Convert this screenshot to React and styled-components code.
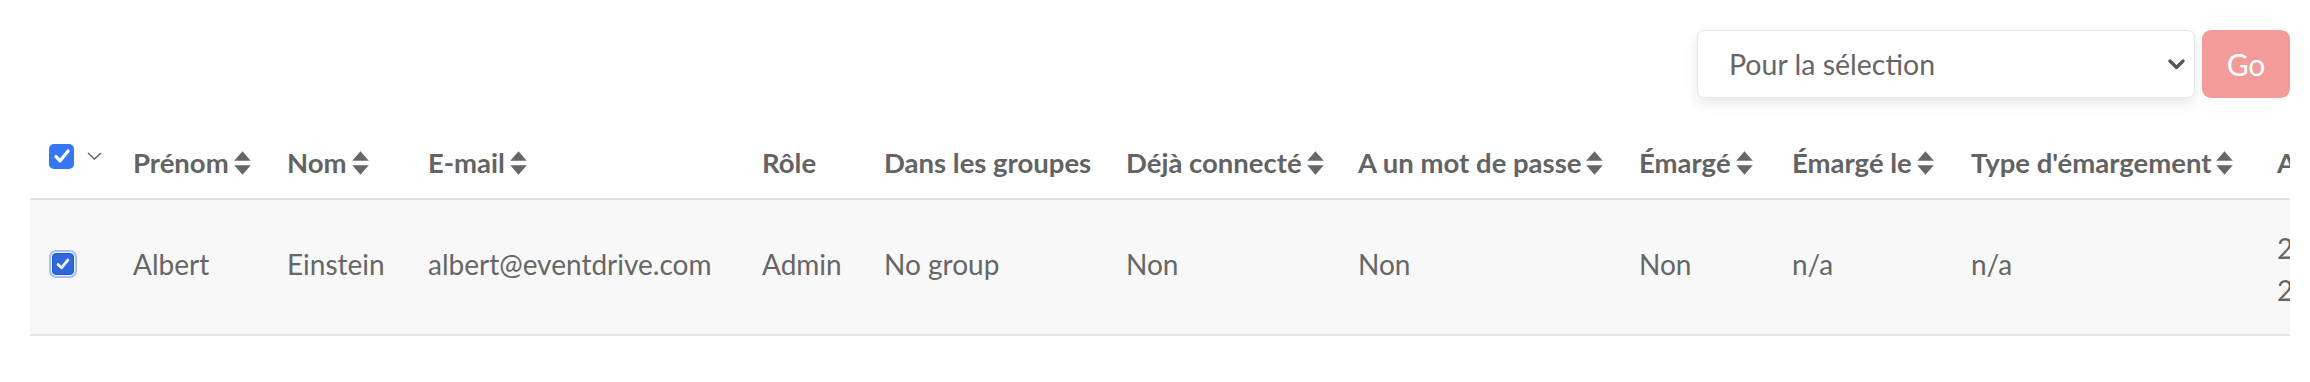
import React from 'react';
import styled, { createGlobalStyle } from 'styled-components';

const GlobalStyle = createGlobalStyle`
  body {
    margin: 0;
    background: #ffffff;
    font-family: "Lato", "Open Sans", "Noto Sans", sans-serif;
    color: #666666;
  }
`;

const columns = [
  { key: 'firstName', label: 'Prénom', width: 154, sortable: true },
  { key: 'lastName', label: 'Nom', width: 141, sortable: true },
  { key: 'email', label: 'E-mail', width: 334, sortable: true },
  { key: 'role', label: 'Rôle', width: 122 },
  { key: 'groups', label: 'Dans les groupes', width: 242 },
  { key: 'connected', label: 'Déjà connecté', width: 232, sortable: true },
  { key: 'password', label: 'A un mot de passe', width: 281, sortable: true },
  { key: 'signed', label: 'Émargé', width: 153, sortable: true },
  { key: 'signedAt', label: 'Émargé le', width: 179, sortable: true },
  { key: 'signType', label: "Type d'émargement", width: 306, sortable: true },
  { key: 'addedAt', label: 'Ajouté le', width: 250, sortable: true },
];

const rows = [
  {
    id: 1,
    firstName: 'Albert',
    lastName: 'Einstein',
    email: 'albert@eventdrive.com',
    role: 'Admin',
    groups: 'No group',
    connected: 'Non',
    password: 'Non',
    signed: 'Non',
    signedAt: 'n/a',
    signType: 'n/a',
    addedAt: ['2023-09-14', '22:41:08'],
  },
];

function SortIcon() {
  return (
    <SortSvg viewBox="0 0 16 22" aria-hidden="true">
      <path d="M8 1 L15 9 L1 9 Z" fill="currentColor" />
      <path d="M1 13 L15 13 L8 21 Z" fill="currentColor" />
    </SortSvg>
  );
}

function CheckMark({ size }) {
  return (
    <svg width={size} height={size} viewBox="0 0 20 20" aria-hidden="true">
      <path
        d="M4.5 10.5 L8.3 14.3 L15.5 5.5"
        fill="none"
        stroke="#ffffff"
        strokeWidth="3"
        strokeLinecap="round"
        strokeLinejoin="round"
      />
    </svg>
  );
}

function App() {
  return (
    <Page>
      <GlobalStyle />
      <Toolbar>
        <SelectBox>
          <SelectLabel>Pour la sélection</SelectLabel>
          <svg width="17" height="11" viewBox="0 0 17 11" aria-hidden="true">
            <path d="M2 2 L8.5 8.5 L15 2" fill="none" stroke="#555" strokeWidth="3.2" strokeLinecap="round" strokeLinejoin="round" />
          </svg>
        </SelectBox>
        <GoButton>Go</GoButton>
      </Toolbar>

      <TableWrap>
        <Table>
          <colgroup>
            <col style={{ width: 87 }} />
            {columns.map((c) => (
              <col key={c.key} style={{ width: c.width }} />
            ))}
          </colgroup>
          <thead>
            <tr>
              <HeadCell $first>
                <SelectAll>
                  <HeaderBox>
                    <CheckMark size={22} />
                  </HeaderBox>
                  <svg width="15" height="8" viewBox="0 0 15 8" aria-hidden="true">
                    <path d="M1 1 L7.5 7 L14 1" fill="none" stroke="#666" strokeWidth="1.6" />
                  </svg>
                </SelectAll>
              </HeadCell>
              {columns.map((c) => (
                <HeadCell key={c.key}>
                  <HeadLabel>
                    {c.label}
                    {c.sortable && <SortIcon />}
                  </HeadLabel>
                </HeadCell>
              ))}
            </tr>
          </thead>
          <tbody>
            {rows.map((r) => (
              <tr key={r.id}>
                <Cell $first>
                  <RowBox>
                    <CheckMark size={18} />
                  </RowBox>
                </Cell>
                {columns.map((c) => (
                  <Cell key={c.key} $multi={Array.isArray(r[c.key])}>
                    {Array.isArray(r[c.key])
                      ? r[c.key].map((line) => <div key={line}>{line}</div>)
                      : r[c.key]}
                  </Cell>
                ))}
              </tr>
            ))}
          </tbody>
        </Table>
      </TableWrap>
    </Page>
  );
}

const Page = styled.div`
  padding: 30px 20px 0 30px;
  width: 2310px;
  box-sizing: border-box;
`;

const Toolbar = styled.div`
  display: flex;
  justify-content: flex-end;
  gap: 7px;
  height: 68px;
`;

const SelectBox = styled.div`
  width: 498px;
  box-sizing: border-box;
  display: flex;
  align-items: center;
  justify-content: space-between;
  padding: 0 9px 0 31px;
  background: #fff;
  border: 1px solid #e6e6e6;
  border-radius: 7px;
  box-shadow: 0 5px 14px rgba(0, 0, 0, 0.1);
`;

const SelectLabel = styled.span`
  font-size: 28.5px;
  color: #666;
`;

const GoButton = styled.button`
  width: 88px;
  border: none;
  border-radius: 9px;
  background: #f29b99;
  color: #fff;
  font-family: inherit;
  font-size: 30px;
  padding: 0;
`;

const TableWrap = styled.div`
  margin-top: 46px;
  overflow: hidden;
  width: 2260px;
`;

const Table = styled.table`
  border-collapse: collapse;
  table-layout: fixed;
  width: 2481px;
`;

const HeadCell = styled.th`
  text-align: left;
  padding: 0 0 16px ${(p) => (p.$first ? '19px' : '16px')};
  line-height: 38px;
  font-size: 27.5px;
  font-weight: 700;
  color: #636363;
  white-space: nowrap;
  border-bottom: 2px solid #e2e2e2;
  vertical-align: middle;
`;

const HeadLabel = styled.span`
  display: inline-flex;
  align-items: center;
  gap: 4px;
`;

const SortSvg = styled.svg`
  width: 19px;
  height: 26px;
  color: #666;
  flex-shrink: 0;
`;

const SelectAll = styled.span`
  display: inline-flex;
  align-items: center;
  gap: 13px;
  transform: translateY(-6px);
`;

const HeaderBox = styled.span`
  width: 25px;
  height: 25px;
  border-radius: 5px;
  background: #3478f6;
  display: inline-flex;
  align-items: center;
  justify-content: center;
`;

const Cell = styled.td`
  box-sizing: border-box;
  height: 136px;
  padding: ${(p) => (p.$multi ? '4px 0 0' : '0 0 6px')} ${(p) => (p.$first ? '22px' : '16px')};
  background: #f8f8f8;
  border-bottom: 2px solid #e6e6e6;
  font-size: 28px;
  line-height: ${(p) => (p.$multi ? '42px' : '32px')};
  color: #666;
  white-space: nowrap;
  vertical-align: middle;
`;

const RowBox = styled.span`
  width: 20px;
  height: 20px;
  border-radius: 4px;
  background: #2f67dc;
  border: 1px solid #1f55c8;
  display: flex;
  align-items: center;
  justify-content: center;
  outline: 2px solid rgba(90, 145, 245, 0.55);
  outline-offset: 1px;
`;

export default App;
